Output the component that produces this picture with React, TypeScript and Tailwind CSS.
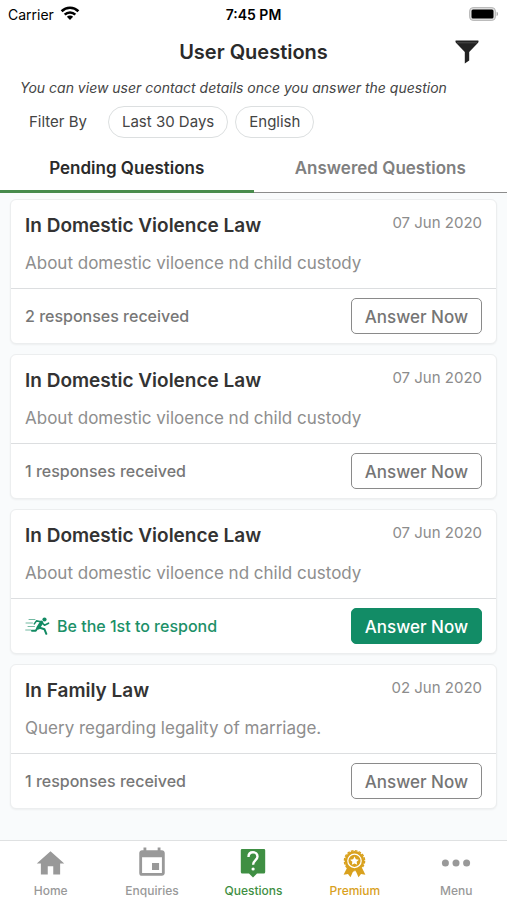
import React, { useState } from 'react';
import { MdEvent, MdHome } from 'react-icons/md';

interface Question {
    id: number;
    title: string;
    date: string;
    text: string;
    responses: number;
}

const questions: Question[] = [
    { id: 1, title: 'In Domestic Violence Law', date: '07 Jun 2020', text: 'About domestic viloence nd child custody', responses: 2 },
    { id: 2, title: 'In Domestic Violence Law', date: '07 Jun 2020', text: 'About domestic viloence nd child custody', responses: 1 },
    { id: 3, title: 'In Domestic Violence Law', date: '07 Jun 2020', text: 'About domestic viloence nd child custody', responses: 0 },
    { id: 4, title: 'In Family Law', date: '02 Jun 2020', text: 'Query regarding legality of marriage.', responses: 1 }
];

const WifiIcon = () => (
    <svg width="20" height="16" viewBox="0 0 20 16" fill="none" stroke="#000" strokeWidth="2.6" aria-hidden="true">
        <path d="M1.6 5.2a12 12 0 0 1 16.8 0" />
        <path d="M4.7 8.6a7.6 7.6 0 0 1 10.6 0" />
        <path d="M10 14l-3.1-3.2a4.4 4.4 0 0 1 6.2 0z" fill="#000" stroke="none" />
    </svg>
);

const BatteryIcon = () => (
    <svg width="30" height="14" viewBox="0 0 30 14" aria-hidden="true">
        <rect x="0.6" y="0.6" width="25.8" height="12.8" rx="3.5" fill="#e0e0e0" stroke="#b5b5b5" />
        <rect x="2.5" y="2.5" width="22" height="9" rx="1.5" fill="#000" />
        <path d="M27.6 4.8c1.8.5 1.8 3.9 0 4.4z" fill="#a5a5a5" />
    </svg>
);

const FunnelIcon = () => (
    <svg width="24" height="24" viewBox="0 0 24 24" fill="#222" aria-hidden="true">
        <path d="M1 .5h22c.5 0 .7.4.6.8-.1.900-.500 1.500-1 2L14.200 12v8.500L9.800 23.600V12L1.400 3.300C.9 2.800.5 2.200.4 1.300.3.9.5.5 1 .5z" />
        <path d="M2 2.800h20" stroke="#777" strokeWidth="0.500" />
    </svg>
);

const RunnerIcon = () => (
    <svg width="26" height="18" viewBox="0 0 26 18" fill="none" stroke="#128a63" strokeLinecap="round" strokeLinejoin="round" aria-hidden="true">
        <circle cx="19.5" cy="2.5" r="2.1" fill="#128a63" stroke="none" />
        <path d="M16.5 5.5l-3.3 5.2" strokeWidth="3.6" />
        <path d="M16 4.7l-4.500-.8-2.200 3" strokeWidth="1.6" />
        <path d="M17.2 6l2.300 2.200 4-2" strokeWidth="1.7" />
        <path d="M14 10.5l5.500 1.800 1.800 4.500" strokeWidth="2" />
        <path d="M12.5 11l-1.800 2.800H7" strokeWidth="2" />
        <path d="M4 2.500h6M1 6h6.500M3 9.500h6.500M.7 13H6" strokeWidth="0.8" opacity="0.75" />
    </svg>
);

const QuestionIcon = () => (
    <svg width="26" height="30" viewBox="0 0 26 30" aria-hidden="true">
        <path d="M2 1h22a1.200 1.200 0 0 1 1.200 1.200V24A1.500 1.500 0 0 1 23.700 25.500H17L13 29.500 9 25.500H2.300A1.500 1.500 0 0 1 .8 24V2.200A1.200 1.200 0 0 1 2 1z" fill="#3f8f43" />
        <path d="M8.500 9c0-2.900 1.900-4.700 4.500-4.700s4.500 1.700 4.500 4.200c0 3.600-4.400 3.700-4.400 8.300" fill="none" stroke="#fff" strokeWidth="2.4" />
        <circle cx="13.1" cy="21" r="1.6" fill="#fff" />
    </svg>
);

const AwardIcon = () => (
    <svg width="25" height="29" viewBox="0 0 28 31" preserveAspectRatio="xMidYMid meet" aria-hidden="true">
        <path d="M6.500 18.500L1.800 28l4.900-.8L9.500 31l4-9h1l4 9 2.800-3.800 4.900.8-4.700-9.500z" fill="#d9a11e" />
        <circle cx="14" cy="12.500" r="11" fill="#d9a11e" />
        <circle cx="14" cy="12.500" r="11.300" fill="none" stroke="#d9a11e" strokeWidth="1.600" strokeDasharray="3 1.437" />
        <circle cx="14" cy="12.500" r="7.500" fill="none" stroke="#fff" strokeWidth="1.400" />
        <path d="M14 7.600l1.500 3.100 3.400.5-2.500 2.400.6 3.400-3-1.600-3 1.600.6-3.400-2.500-2.400 3.400-.5z" fill="#fff" />
    </svg>
);

const DotsIcon = () => (
    <svg width="30" height="8" viewBox="0 0 30 8" fill="currentColor" aria-hidden="true">
        <circle cx="4.4" cy="4" r="3.5" />
        <circle cx="15" cy="4" r="3.5" />
        <circle cx="25.6" cy="4" r="3.5" />
    </svg>
);

const QuestionCard = ({ question }: { question: Question }) => {
    const first = question.responses === 0;

    return (
        <article className="rounded-md border border-[#eceeef] bg-white shadow-xs">
            <div className="border-b border-[#dcdee0] px-3.5 pt-3 pb-[11px]">
                <div className="flex items-start justify-between">
                    <h2 className="text-[19px] leading-7 font-semibold text-[#333]">{question.title}</h2>
                    <time className="text-[15px] leading-[22px] text-[#8c8c8c]">{question.date}</time>
                </div>
                <p className="mt-[9px] text-[17px] leading-7 text-[#8e8e8e]">{question.text}</p>
            </div>
            <div className="flex items-center justify-between px-3.5 py-[9px]">
                {first ? (
                    <span className="flex items-center gap-1.5 text-[16px] font-medium text-[#1c9068]">
                        <RunnerIcon />
                        Be the 1st to respond
                    </span>
                ) : (
                    <span className="text-[16px] font-medium text-[#777]">{question.responses} responses received</span>
                )}
                <button
                    type="button"
                    className={`h-9 rounded-[5px] border px-[13px] pt-0.5 text-[17px] leading-8 font-medium ${first ? 'border-[#128c66] bg-[#128c66] text-white' : 'border-[#8a8a8a] bg-white text-[#757575]'}`}
                >
                    Answer Now
                </button>
            </div>
        </article>
    );
};

const navItems = [
    { label: 'Home', icon: <MdHome size={33} />, color: 'text-[#999]' },
    { label: 'Enquiries', icon: <MdEvent size={34} />, color: 'text-[#999]' },
    { label: 'Questions', icon: <QuestionIcon />, color: 'text-[#3f8f43]' },
    { label: 'Premium', icon: <AwardIcon />, color: 'text-[#d9a11e]' },
    { label: 'Menu', icon: <DotsIcon />, color: 'text-[#999]' }
];

const App: React.FC = () => {
    const [tab, setTab] = useState<'pending' | 'answered'>('pending');

    return (
        <div className="flex min-h-screen flex-col bg-[#f9fbfc] font-['Inter','Liberation_Sans',sans-serif]">
            <header className="bg-white">
                {/* Status bar */}
                <div className="grid h-7 grid-cols-3 items-center px-2 text-[14px] text-black">
                    <span className="flex items-center gap-1.5">
                        Carrier
                        <WifiIcon />
                    </span>
                    <span className="text-center font-semibold">7:45 PM</span>
                    <span className="flex justify-end">
                        <BatteryIcon />
                    </span>
                </div>

                {/* Title */}
                <div className="grid h-12 grid-cols-[1fr_auto_1fr] items-center px-7">
                    <h1 className="col-start-2 text-[20px] font-semibold text-[#2a2a2a]">User Questions</h1>
                    <button type="button" aria-label="Filter" className="justify-self-end">
                        <FunnelIcon />
                    </button>
                </div>
                <p className="px-5 text-[14px] leading-6 whitespace-nowrap text-[#444] italic">
                    You can view user contact details once you answer the question
                </p>

                {/* Filters */}
                <div className="mt-1.5 flex items-center gap-[7px] pl-[29px] text-[15px] text-[#444]">
                    <span className="mr-3.5">Filter By</span>
                    <button type="button" className="h-8 rounded-full border border-[#dcdfe0] px-[13px]">
                        Last 30 Days
                    </button>
                    <button type="button" className="h-8 rounded-full border border-[#dcdfe0] px-[13px]">
                        English
                    </button>
                </div>

                {/* Tabs */}
                <div role="tablist" className="mt-1 grid grid-cols-2 text-[17px]">
                    <button
                        type="button"
                        role="tab"
                        aria-selected={tab === 'pending'}
                        onClick={() => setTab('pending')}
                        className={`h-[51px] ${tab === 'pending' ? 'border-b-3 border-[#478b4c] pt-1.5 font-semibold text-[#2a2a2a]' : 'border-b border-[#8c8c8c] pt-1 font-semibold text-[#808080]'}`}
                    >
                        Pending Questions
                    </button>
                    <button
                        type="button"
                        role="tab"
                        aria-selected={tab === 'answered'}
                        onClick={() => setTab('answered')}
                        className={`h-[51px] ${tab === 'answered' ? 'border-b-3 border-[#478b4c] pt-1.5 font-semibold text-[#2a2a2a]' : 'border-b border-[#8c8c8c] pt-1 font-semibold text-[#808080]'}`}
                    >
                        Answered Questions
                    </button>
                </div>
            </header>

            <main className="flex flex-1 flex-col gap-2.5 px-2.5 pt-1.5">
                {questions.map(q => (
                    <QuestionCard key={q.id} question={q} />
                ))}
            </main>

            <nav className="grid h-15 grid-cols-5 border-t border-[#dfe1e2] bg-white">
                {navItems.map(item => (
                    <a key={item.label} href="#" className={`flex flex-col items-center pt-1 text-[12px] leading-4 font-medium ${item.color}`}>
                        <span className="mb-0.5 flex h-9 items-center">{item.icon}</span>
                        {item.label}
                    </a>
                ))}
            </nav>
        </div>
    );
};

export default App;
